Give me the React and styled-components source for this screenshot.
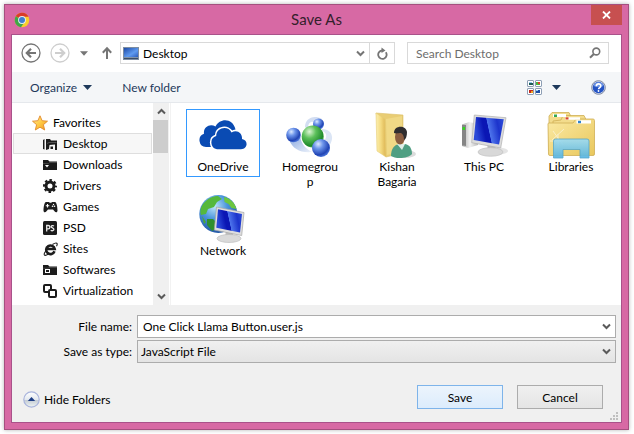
import React, { useState } from "react";
import styled, { createGlobalStyle, css } from "styled-components";

const GlobalStyle = createGlobalStyle`
  * { box-sizing: border-box; }
  body {
    margin: 0;
    background: #fff;
    color: #000;
    font: 12px/15px Lato, "Open Sans", sans-serif;
  }
  button, input, select { font: inherit; color: inherit; }
  svg { display: block; flex: none; }
`;

/* ---------- window frame ---------- */

const Dialog = styled.main`
  margin: 4px 5px 4px 4px;
  padding: 0 6px 6px;
  background: #d769a4;
  border: 1px solid #a5507f;
  box-shadow: 0 0 4px rgba(0, 0, 0, 0.3);
`;

const TitleBar = styled.header`
  display: grid;
  grid-template-columns: 40px 1fr 40px;
  height: 29px;
`;

const AppIcon = styled.span`
  padding: 7px 0 0 3px;
`;

const Title = styled.h1`
  margin: 0;
  font-size: 15px;
  font-weight: 400;
  line-height: 29px;
  text-align: center;
  color: #33202b;
`;

const CloseButton = styled.button`
  justify-self: end;
  display: grid;
  place-items: center;
  width: 31px;
  height: 20px;
  padding: 0;
  border: 0;
  background: #c75050;
`;

const Client = styled.div`
  border: 1px solid #a9528a;
  background: #fff;
`;

/* ---------- navigation ---------- */

const NavBar = styled.nav`
  display: flex;
  align-items: center;
  height: 37px;
  padding: 0 12px 1px 9px;
`;

const NavButtons = styled.div`
  display: flex;
  align-items: center;
  gap: 9px;
  width: 99px;
  flex: none;
`;

const IconButton = styled.button`
  display: grid;
  place-items: center;
  flex: none;
  padding: 0;
  border: 0;
  background: none;
  width: ${(p) => p.$width || 20}px;
  height: 20px;
`;

const FieldBox = styled.div`
  display: flex;
  align-items: center;
  height: 22px;
  border: 1px solid #d9d9d9;
  background: #fff;
  min-width: 0;
`;

const AddressBox = styled(FieldBox)`
  flex: 1 1 275px;
  margin-right: 12px;
`;

const SearchBox = styled(FieldBox)`
  flex: 1 1 202px;
  padding: 0 6px 0 8px;
`;

const Crumb = styled.button`
  display: flex;
  align-items: center;
  gap: 4px;
  flex: 1;
  padding: 0 0 0 2px;
  border: 0;
  background: none;
  text-align: left;
`;

const RefreshButton = styled(IconButton)`
  border-left: 1px solid #d9d9d9;
`;

const SearchInput = styled.input`
  flex: 1;
  min-width: 0;
  padding: 0;
  border: 0;
  outline: 0;
  background: none;
  &::placeholder { color: #6d6d6d; opacity: 1; }
`;

/* ---------- toolbar ---------- */

const Toolbar = styled.div`
  display: flex;
  align-items: center;
  height: 31px;
  padding: 0 15px 0 18px;
  background: #f4f6f8;
  border-bottom: 1px solid #e5e8ec;
`;

const ToolButton = styled.button`
  display: flex;
  align-items: center;
  gap: ${(p) => p.$gap || 6}px;
  padding: 0;
  border: 0;
  background: none;
  color: #1e395b;
`;

const ToolGroup = styled.div`
  display: flex;
  align-items: center;
  gap: 30px;
  &:last-child { margin-left: auto; }
`;

/* ---------- body ---------- */

const Body = styled.div`
  display: flex;
`;

const Tree = styled.ul`
  flex: none;
  width: 141px;
  margin: 0;
  padding: 9px 1px 4px;
  list-style: none;
`;

const TreeRow = styled.button`
  display: flex;
  align-items: center;
  gap: 5px;
  width: 100%;
  height: 21px;
  padding: 0 0 0 ${(p) => (p.$root ? 18 : 29)}px;
  border: 1px solid ${(p) => (p.$active ? "#dedede" : "transparent")};
  background: ${(p) => (p.$active ? "#f7f7f7" : "none")};
  white-space: nowrap;
`;

const ScrollBar = styled.div`
  display: flex;
  flex-direction: column;
  flex: none;
  width: 16px;
  background: #f0f0f0;
`;

const ScrollButton = styled.button`
  display: grid;
  place-items: center;
  height: 17px;
  padding: 0;
  border: 0;
  background: none;
  &:last-child { margin-top: auto; }
`;

const ScrollThumb = styled.div`
  height: 33px;
  margin-right: 1px;
  background: #cdcdcd;
`;

const Files = styled.ul`
  flex: 1;
  display: grid;
  grid-template-columns: repeat(auto-fill, 74px);
  grid-auto-rows: 84px;
  align-items: start;
  column-gap: 13px;
  margin: 0 0 0 1px;
  padding: 6px 12px 0 15px;
  border-left: 1px solid #f2f2f2;
  list-style: none;
`;

const FileItem = styled.button`
  display: flex;
  flex-direction: column;
  align-items: center;
  width: 74px;
  padding: 1px 6px 2px;
  border: 1px solid ${(p) => (p.$active ? "#3399ff" : "transparent")};
  background: none;
`;

const FileName = styled.span`
  width: 60px;
  overflow-wrap: anywhere;
  text-align: center;
`;

/* ---------- footer ---------- */

const Footer = styled.form`
  padding: 10px 5px 13px 0;
  background: #f0f0f0;
`;

const Fields = styled.div`
  display: grid;
  grid-template-columns: 120px 1fr;
  column-gap: 5px;
  row-gap: 2px;
  align-items: center;
`;

const Label = styled.label`
  text-align: right;
`;

const Combo = styled.div`
  display: grid;
  grid-template-columns: 1fr 18px;
  align-items: center;
  height: 23px;
  border: 1px solid #acacac;
  background: ${(p) => (p.$raised ? "linear-gradient(#f0f0f0, #e4e4e4)" : "#fff")};
`;

const comboControl = css`
  grid-row: 1;
  grid-column: 1 / 3;
  width: 100%;
  height: 21px;
  border: 0;
  outline: 0;
  background: none;
`;

const NameInput = styled.input`
  ${comboControl}
  padding: 0 20px 1px 5px;
`;

const TypeSelect = styled.select`
  ${comboControl}
  appearance: none;
  padding: 0 20px 0 3px;
`;

const ComboArrow = styled.span`
  grid-row: 1;
  grid-column: 2;
  display: grid;
  place-items: center;
  pointer-events: none;
`;

const Actions = styled.div`
  display: flex;
  align-items: flex-end;
  gap: 14px;
  margin-top: 22px;
  padding: 0 13px 0 11px;
`;

const HideFolders = styled.button`
  display: flex;
  align-items: center;
  gap: 4px;
  height: 20px;
  margin-right: auto;
  padding: 0;
  border: 0;
  background: none;
`;

const PushButton = styled.button`
  width: 86px;
  height: 24px;
  padding: 0;
  border: 1px solid ${(p) => (p.$primary ? "#7eb4ea" : "#acacac")};
  background: ${(p) =>
    p.$primary
      ? "linear-gradient(#ecf4fc, #dcecfc)"
      : "linear-gradient(#f0f0f0, #e5e5e5)"};
`;

const FooterFrame = styled.div`
  position: relative;
`;

const Grip = styled.span`
  position: absolute;
  right: 3px;
  bottom: 2px;
`;

/* ---------- small glyphs ---------- */

const Caret = ({ color = "#1e395b", w = 9 }) => (
  <svg width={w} height="5" viewBox="0 0 9 5">
    <path d="M0 0h9L4.500 5z" fill={color} />
  </svg>
);

const Chevron = ({ up, color = "#5a5a5a" }) => (
  <svg width="9" height="7" viewBox="0 0 9 7">
    <path
      d={up ? "M1 5.500 4.500 2 8 5.500" : "M1 1.500 4.500 5 8 1.500"}
      fill="none"
      stroke={color}
      strokeWidth="2"
    />
  </svg>
);

const ChromeIcon = () => (
  <svg width="16" height="16" viewBox="0 0 16 16">
    <circle cx="8" cy="8" r="7.300" fill="#f8cf2c" />
    <path d="M8 8 1.700 4.300A7.300 7.300 0 0 1 14.500 4.700H8z" fill="#d93a2b" />
    <path d="M8 8 1.700 4.300A7.300 7.300 0 0 0 7 15.200L10.500 10z" fill="#3fa648" />
    <circle cx="8" cy="8" r="3.900" fill="#e9eef3" />
    <circle cx="8" cy="8" r="3" fill="#3f7fd0" />
  </svg>
);

const CloseIcon = () => (
  <svg width="9" height="8" viewBox="0 0 9 8">
    <path d="M1 .5 8 7.500M8 .5 1 7.500" stroke="#fff" strokeWidth="1.800" />
  </svg>
);

const RoundArrow = ({ color, flip }) => (
  <svg width="20" height="20" viewBox="0 0 20 20">
    <g
      fill="none"
      stroke={color}
      transform={flip ? "translate(20 0) scale(-1 1)" : undefined}
    >
      <circle cx="10" cy="10" r="9" strokeWidth="1.300" />
      <path d="M15 10H6M10 5.800 5.800 10l4.200 4.200" strokeWidth="2.200" />
    </g>
  </svg>
);

const UpArrow = () => (
  <svg width="12" height="14" viewBox="0 0 12 14">
    <path d="M6 13V2.500M1.800 6.700 6 2.300l4.200 4.400" fill="none" stroke="#757575" strokeWidth="2" />
  </svg>
);

const DesktopIcon = () => (
  <svg width="16" height="14" viewBox="0 0 16 14">
    <defs>
      <linearGradient id="desk" x1="0" y1="0" x2="1" y2="1">
        <stop offset="0" stopColor="#1c49a6" />
        <stop offset="0.600" stopColor="#5f9bf0" />
        <stop offset="1" stopColor="#2c5cbc" />
      </linearGradient>
    </defs>
    <rect x="0.500" y="1.500" width="15" height="12" fill="#8294a8" stroke="#7c8da2" />
    <rect x="1" y="2" width="14" height="9" fill="url(#desk)" />
    <path d="M1 12.500h14" stroke="#3b4d66" />
  </svg>
);

const RefreshIcon = () => (
  <svg width="12" height="13" viewBox="0 0 12 13">
    <path d="M9.800 5.200A4.200 4.200 0 1 1 6 3.500" fill="none" stroke="#757575" strokeWidth="1.800" />
    <path d="M5.500 .5 9.500 3.500 5.500 6z" fill="#757575" />
  </svg>
);

const SearchIcon = () => (
  <svg width="12" height="12" viewBox="0 0 12 12">
    <circle cx="7.300" cy="4.500" r="3.400" fill="none" stroke="#757575" strokeWidth="1.600" />
    <path d="M4.800 7 1 10.800" stroke="#757575" strokeWidth="2" />
  </svg>
);

const ViewIcon = () => (
  <svg width="15" height="15" viewBox="0 0 15 15">
    <g fill="#fff" stroke="#8e9fb5">
      <rect x="0.500" y="0.500" width="6" height="6" rx="0.500" />
      <rect x="8.500" y="0.500" width="6" height="6" rx="0.500" />
      <rect x="0.500" y="8.500" width="6" height="6" rx="0.500" />
      <rect x="8.500" y="8.500" width="6" height="6" rx="0.500" />
    </g>
    <path d="M2 2h3v2H2z" fill="#8fc8ef" />
    <path d="M2 3h4v2H2z" fill="#1f5c55" />
    <path d="M9 2h4v3H9z" fill="#49b53c" />
    <path d="M11 2h2v2h-2z" fill="#e0402c" />
    <path d="M2 10h4v3H2z" fill="#c3261a" />
    <path d="M4 11h2v2H4z" fill="#f0a61f" />
    <path d="M9 10h4v3H9z" fill="#1d4ea8" />
    <path d="M9 10h2v1H9z" fill="#8fc8ef" />
  </svg>
);

const HelpIcon = () => (
  <svg width="15" height="15" viewBox="0 0 15 15">
    <circle cx="7.500" cy="7.500" r="6.800" fill="#dfe6f4" stroke="#7b86a0" />
    <circle cx="7.500" cy="7.500" r="5.800" fill="#2453c4" />
    <path d="M2.500 6a5.200 5.200 0 0 1 10 0Q7.500 8 2.500 6z" fill="#6b93e4" />
    <path d="M5.300 6.200c0-3.200 4.600-3 4.500-.2 0 1.600-2.200 1.600-2.200 3.200" fill="none" stroke="#fff" strokeWidth="1.600" />
    <circle cx="7.500" cy="11" r="0.900" fill="#fff" />
  </svg>
);

const HideIcon = () => (
  <svg width="17" height="17" viewBox="0 0 17 17">
    <defs>
      <linearGradient id="hide" x1="0" y1="0" x2="0" y2="1">
        <stop offset="0" stopColor="#fff" />
        <stop offset="0.500" stopColor="#e4e9ef" />
        <stop offset="0.550" stopColor="#c4ccd4" />
        <stop offset="1" stopColor="#f0f5f5" />
      </linearGradient>
    </defs>
    <circle cx="8.500" cy="8.500" r="7.700" fill="url(#hide)" stroke="#a9b4dc" strokeWidth="1.200" />
    <path d="M4.800 10 8.500 6l3.700 4z" fill="#1f3f86" />
  </svg>
);

/* ---------- folder tree icons ---------- */

const ink = "#1c1c1c";

const treeIcons = {
  star: (
    <svg width="16" height="16" viewBox="0 0 16 16">
      <defs>
        <linearGradient id="star" x1="0" y1="0" x2="1" y2="1">
          <stop offset="0" stopColor="#ffe9a0" />
          <stop offset="0.500" stopColor="#ffcb45" />
          <stop offset="1" stopColor="#ef9420" />
        </linearGradient>
      </defs>
      <path
        d="M8 .8 10.100 5.700 15.500 6.200 11.400 9.700 12.700 15 8 12.200 3.300 15 4.600 9.700.5 6.200 5.900 5.700z"
        fill="url(#star)"
        stroke="#e28a2b"
        strokeWidth="0.900"
        strokeLinejoin="round"
      />
    </svg>
  ),
  desktop: (
    <svg width="15" height="14" viewBox="0 0 15 14">
      <path d="M0 3 1.500 2v10.500L0 12z" fill={ink} />
      <path d="M3 2h4l1 1.500h6V13h-2V7.500L6.500 8 6 12l-3 1z" fill={ink} />
      <path d="M4 6.500 6 5.500h7.500" fill="none" stroke="#777" strokeWidth="0.600" />
      <path d="M7.500 9.500H10V12H7.500z" fill={ink} />
    </svg>
  ),
  downloads: (
    <svg width="15" height="14" viewBox="0 0 15 14">
      <path d="M0 2h5l1.500 1.500H14V12H0z" fill={ink} />
      <path d="M0 5.500h5.500l1-1H14" fill="none" stroke="#606060" strokeWidth="0.600" />
      <path d="M2 7h4L4 9.500z" fill="#fff" />
    </svg>
  ),
  gear: (
    <svg width="15" height="14" viewBox="0 0 15 14">
      <circle cx="7" cy="7" r="4" fill="none" stroke={ink} strokeWidth="3" />
      <circle cx="7" cy="7" r="6" fill="none" stroke={ink} strokeWidth="2" strokeDasharray="2.500 2.212" strokeDashoffset="1.250" />
    </svg>
  ),
  games: (
    <svg width="15" height="14" viewBox="0 0 15 14">
      <path d="M3 2h3l.7.8h1.600L9 2h3c1.500 0 2.500 5 2.500 8.500 0 2-1.800 2.500-3 .8L10 9.500H5l-1.500 1.800C2.300 13 .5 12.500.5 10.500.5 7 1.500 2 3 2z" fill={ink} />
      <path d="M4.500 4v3.500M2.800 5.700h3.500" stroke="#fff" strokeWidth="1.100" />
      <circle cx="9.500" cy="6.200" r="0.800" fill="#fff" />
      <circle cx="11.500" cy="6.200" r="0.800" fill="#fff" />
      <circle cx="10.500" cy="4.500" r="0.700" fill="#fff" />
    </svg>
  ),
  psd: (
    <svg width="15" height="14" viewBox="0 0 15 14">
      <rect width="14" height="14" rx="1.500" fill={ink} />
      <path d="M3.700 10.500V4.500h1.500a1.600 1.600 0 0 1 0 3.300H3.700M11 5c-1.200-.8-3-.4-2.800.8.200 1.200 2.700 1 2.700 2.500 0 1.600-2 1.800-3.200 1" fill="none" stroke="#e8e8e8" strokeWidth="1.300" />
    </svg>
  ),
  sites: (
    <svg width="15" height="14" viewBox="0 0 15 14">
      <path d="M11.500 9.300A4.300 4.300 0 1 1 11.700 7H4.500" fill="none" stroke={ink} strokeWidth="2.600" />
      <path d="M9.500 2.500C14 -.5 15 1.500 13.500 4.200M3 8.500C-.5 13.500 1.500 14.500 5.500 12" fill="none" stroke={ink} strokeWidth="1.100" />
    </svg>
  ),
  softwares: (
    <svg width="15" height="14" viewBox="0 0 15 14">
      <path d="M0 2h5l1.500 1.500H14V12H0z" fill={ink} />
      <path d="M0 5.200h5l1-.7h8" fill="none" stroke="#606060" strokeWidth="0.600" />
      <rect x="2.500" y="6.500" width="4" height="3" fill="none" stroke="#fff" />
    </svg>
  ),
  virtual: (
    <svg width="15" height="14" viewBox="0 0 15 14">
      <rect x="1" y="1" width="7" height="7" rx="1" fill="none" stroke={ink} strokeWidth="2" />
      <rect x="6" y="6" width="7" height="7" rx="1" fill="#fff" stroke={ink} strokeWidth="2" />
    </svg>
  ),
};

/* ---------- large file icons ---------- */

const BigIcon = ({ children }) => (
  <svg width="48" height="48" viewBox="0 0 48 48">
    {children}
  </svg>
);

const Screen = ({ id }) => (
  <linearGradient id={id} x1="0" y1="0.200" x2="1" y2="0">
    <stop offset="0" stopColor="#2a49d8" />
    <stop offset="0.280" stopColor="#0a16b4" />
    <stop offset="0.420" stopColor="#0a16b4" />
    <stop offset="0.440" stopColor="#4d74ec" />
    <stop offset="0.750" stopColor="#1c34cc" />
    <stop offset="1" stopColor="#2f50dc" />
  </linearGradient>
);

const OneDriveArt = () => (
  <BigIcon>
    <path d="M7 36a6.800 6.800 0 0 1-2-13.200C4 16 11 12 16.500 15.500 21 6.500 34 7 36.500 18.500V36z" fill="#0a4bb3" />
    <path
      d="M18 38.200a6.800 6.800 0 0 1-.8-13.200C17.500 16 29.500 14.500 32.500 21.500 38 18 43.500 22 43 28c6.500 1 6 10-1 10.200z"
      fill="#0a4bb3"
      stroke="#fff"
      strokeWidth="3"
      paintOrder="stroke"
    />
  </BigIcon>
);

const HomegroupArt = () => (
  <BigIcon>
    <defs>
      <radialGradient id="ballB" cx="0.350" cy="0.280" r="0.750">
        <stop offset="0" stopColor="#dce9ff" />
        <stop offset="0.350" stopColor="#6c94ea" />
        <stop offset="0.800" stopColor="#2144b4" />
        <stop offset="1" stopColor="#4d78dc" />
      </radialGradient>
      <radialGradient id="ballG" cx="0.350" cy="0.280" r="0.750">
        <stop offset="0" stopColor="#dff5d6" />
        <stop offset="0.400" stopColor="#5cc05a" />
        <stop offset="0.850" stopColor="#1f8a2c" />
        <stop offset="1" stopColor="#4fb556" />
      </radialGradient>
      <linearGradient id="trail" x1="0" y1="0" x2="1" y2="1">
        <stop offset="0" stopColor="#86a5de" />
        <stop offset="1" stopColor="#eef3fb" />
      </linearGradient>
    </defs>
    <path d="M3 29C7 38 14 42 26 41 20 38 15 33 14 25z" fill="url(#trail)" />
    <path d="M19 16C19 8 27 3 36 8L31 12C25 9 22 12 22 17z" fill="#d3def2" />
    <path d="M36 18c10 0 13 9 7 17l-5-5c4-5 2-9-2-10z" fill="#dbe5f5" />
    <circle cx="7.500" cy="24" r="7.300" fill="url(#ballB)" />
    <circle cx="32.500" cy="13" r="5.500" fill="url(#ballB)" />
    <circle cx="26.700" cy="25.500" r="11" fill="url(#ballG)" />
    <circle cx="35" cy="37" r="9" fill="url(#ballB)" />
  </BigIcon>
);

const UserFolderArt = () => (
  <BigIcon>
    <defs>
      <linearGradient id="flap" x1="0" y1="0" x2="1" y2="0">
        <stop offset="0" stopColor="#fdf0b0" />
        <stop offset="0.500" stopColor="#f3d97e" />
        <stop offset="1" stopColor="#dcb452" />
      </linearGradient>
    </defs>
    <ellipse cx="32" cy="43" rx="11" ry="4" fill="#dcdcdc" />
    <path d="M3 2 30 4V42L13 46z" fill="#e9cd74" stroke="#dcc06a" strokeWidth="0.600" />
    <path d="M3 2 12 8l1 38-9-6z" fill="url(#flap)" stroke="#e6cc75" strokeWidth="0.600" />
    <path d="M13 8 29 5v35l-15 4z" fill="#f0d986" />
    <path d="M18 45c0-7 3-11 8-12h6c5 1 7 5 7 10-4 5-17 5-21 2z" fill="#4f9f83" />
    <path d="M24 33h8l-3 6z" fill="#dfeee8" />
    <ellipse cx="27" cy="26" rx="5" ry="7.500" fill="#8a5d40" />
    <path d="M21 22c0-8 12-8 13-1 0 4-1 7-3 8 0-4-1-6-3-7-3 0-5 1-7 0z" fill="#2f2d2f" />
  </BigIcon>
);

const PcArt = () => (
  <BigIcon>
    <defs>
      <Screen id="scrA" />
      <linearGradient id="metal" x1="0" y1="0" x2="1" y2="0">
        <stop offset="0" stopColor="#a8a8a8" />
        <stop offset="0.500" stopColor="#f2f2f2" />
        <stop offset="1" stopColor="#b8b8b8" />
      </linearGradient>
    </defs>
    <ellipse cx="34" cy="40" rx="14" ry="4" fill="#e4e4e4" />
    <path d="M2 13.500 9 11l9 2v21L8 37l-6-2z" fill="url(#metal)" />
    <path d="M2 14h4v21l-4-.8z" fill="#858585" />
    <path d="M2.500 16H5v3H2.500z" fill="#35d420" />
    <path d="M27 32h8l1 8h-8z" fill="#bdbdbd" />
    <ellipse cx="30.500" cy="41" rx="12.500" ry="4.300" fill="#d8d8d8" stroke="#bcbcbc" strokeWidth="0.600" />
    <path d="M14.300 4 46 6.700 40.700 37 11.700 31.700z" fill="#dcdcdc" stroke="#b0b0b0" strokeWidth="0.700" />
    <path d="M16 6 43.800 8.300 39 33.500 13.700 29z" fill="url(#scrA)" />
  </BigIcon>
);

const LibrariesArt = () => (
  <BigIcon>
    <defs>
      <linearGradient id="lib" x1="0" y1="0" x2="1" y2="1">
        <stop offset="0" stopColor="#fbeaa4" />
        <stop offset="1" stopColor="#e9c75c" />
      </linearGradient>
      <linearGradient id="stand" x1="0" y1="0" x2="0" y2="1">
        <stop offset="0" stopColor="#9fdcf2" />
        <stop offset="1" stopColor="#55b4e2" />
      </linearGradient>
    </defs>
    <g stroke="#cfae55" strokeWidth="0.800">
      <path d="M2 40V5l3-3.500h17l2 4V40z" fill="#f3dc8c" />
      <path d="M6 40V10l8-1 2-4.500h21l2 4 1 31z" fill="#f3dc8c" />
      <path d="M1 13q0-1 1-1H26l3-4H46q1.500 0 1.500 1.500V43q0 1.500-1.500 1.500H3Q1.500 44.500 1.500 43z" fill="url(#lib)" />
    </g>
    <path d="M6 3h13v3H6zM18 6.300h15v2.500H18zM29.500 9.300H44v3.200H29.500z" fill="#fff" />
    <path d="M7 3.500h3v2.500H7z" fill="#35a852" />
    <path d="M18.500 6.300h3v2.200h-3z" fill="#d8482c" />
    <path d="M31 9.800h3v2.400h-3z" fill="#2f83cf" />
    <path d="M11 23v14M5 29l12-11M6 20l10 14M3 30h14" stroke="#fff" strokeWidth="1" opacity="0.500" />
    <path d="M6.500 30q0-2 2-2h31.500q2 0 2 2v17h-9v-8.500H16V47H6.500z" fill="url(#stand)" stroke="#4ba2cc" strokeWidth="0.800" opacity="0.920" />
  </BigIcon>
);

const NetworkArt = () => (
  <BigIcon>
    <defs>
      <Screen id="scrB" />
      <radialGradient id="globe" cx="0.400" cy="0.300" r="0.750">
        <stop offset="0" stopColor="#bfe6fb" />
        <stop offset="0.450" stopColor="#4a94dc" />
        <stop offset="1" stopColor="#1d4f9f" />
      </radialGradient>
    </defs>
    <circle cx="19.300" cy="19" r="19" fill="url(#globe)" />
    <path d="M4 9C9 3 14 1 19 1l4 3-5 3-3 5-6 2-2 5-5 1C.5 16 2 12 4 9z" fill="#55b83c" />
    <path d="M25 2c6 1 11 6 12.500 12l-5-1-3-4-4-2z" fill="#6cc63f" />
    <path d="M8 24l6 0 4 4-1 6-4 2-5-6z" fill="#2f8f2f" />
    <path d="M3 21l4 6-2 2z" fill="#4aa838" />
    <path d="M27 35h7v8h-8z" fill="#bdbdbd" />
    <ellipse cx="30" cy="43.500" rx="12" ry="4" fill="#dadada" stroke="#b8b8b8" strokeWidth="0.600" />
    <path d="M17.500 12 45 17.500 42.700 40.500 15.300 35z" fill="#dedede" stroke="#a5a5a5" strokeWidth="0.700" />
    <path d="M19 14.300 43 19 41 37.500 17.300 32.800z" fill="url(#scrB)" />
  </BigIcon>
);

/* ---------- data ---------- */

const favorites = [
  ["Desktop", "desktop"],
  ["Downloads", "downloads"],
  ["Drivers", "gear"],
  ["Games", "games"],
  ["PSD", "psd"],
  ["Sites", "sites"],
  ["Softwares", "softwares"],
  ["Virtualization", "virtual"],
];

const files = [
  ["OneDrive", OneDriveArt],
  ["Homegroup", HomegroupArt],
  ["Kishan Bagaria", UserFolderArt],
  ["This PC", PcArt],
  ["Libraries", LibrariesArt],
  ["Network", NetworkArt],
];

export default function App() {
  const [folder, setFolder] = useState("Desktop");
  const [selected, setSelected] = useState("OneDrive");

  return (
    <>
      <GlobalStyle />
      <Dialog>
        <TitleBar>
          <AppIcon><ChromeIcon /></AppIcon>
          <Title>Save As</Title>
          <CloseButton aria-label="Close"><CloseIcon /></CloseButton>
        </TitleBar>
        <Client>
          <NavBar>
            <NavButtons>
              <IconButton aria-label="Back"><RoundArrow color="#757575" /></IconButton>
              <IconButton aria-label="Forward"><RoundArrow color="#cecece" flip /></IconButton>
              <IconButton aria-label="Recent locations" $width={9}><Caret color="#757575" w={8} /></IconButton>
              <IconButton aria-label="Up"><UpArrow /></IconButton>
            </NavButtons>
            <AddressBox>
              <Crumb><DesktopIcon />Desktop</Crumb>
              <IconButton aria-label="Previous locations" $width={17}><Chevron color="#757575" /></IconButton>
              <RefreshButton aria-label="Refresh" $width={25}><RefreshIcon /></RefreshButton>
            </AddressBox>
            <SearchBox>
              <SearchInput aria-label="Search Desktop" placeholder="Search Desktop" />
              <IconButton aria-label="Search" $width={15}><SearchIcon /></IconButton>
            </SearchBox>
          </NavBar>
          <Toolbar>
            <ToolGroup>
              <ToolButton>Organize<Caret /></ToolButton>
              <ToolButton>New folder</ToolButton>
            </ToolGroup>
            <ToolGroup>
              <ToolButton aria-label="Change view" $gap={10}><ViewIcon /><Caret /></ToolButton>
              <ToolButton aria-label="Help"><HelpIcon /></ToolButton>
            </ToolGroup>
          </Toolbar>
          <Body>
            <Tree>
              <li><TreeRow $root>{treeIcons.star}Favorites</TreeRow></li>
              {favorites.map(([name, icon]) => (
                <li key={name}>
                  <TreeRow $active={name === folder} onClick={() => setFolder(name)}>
                    {treeIcons[icon]}{name}
                  </TreeRow>
                </li>
              ))}
            </Tree>
            <ScrollBar>
              <ScrollButton aria-label="Scroll up"><Chevron up /></ScrollButton>
              <ScrollThumb />
              <ScrollButton aria-label="Scroll down"><Chevron /></ScrollButton>
            </ScrollBar>
            <Files>
              {files.map(([name, Art]) => (
                <li key={name}>
                  <FileItem $active={name === selected} onClick={() => setSelected(name)}>
                    <Art />
                    <FileName>{name}</FileName>
                  </FileItem>
                </li>
              ))}
            </Files>
          </Body>
          <FooterFrame>
            <Footer onSubmit={(e) => e.preventDefault()}>
              <Fields>
                <Label htmlFor="file-name">File name:</Label>
                <Combo>
                  <NameInput id="file-name" defaultValue="One Click Llama Button.user.js" />
                  <ComboArrow><Chevron /></ComboArrow>
                </Combo>
                <Label htmlFor="file-type">Save as type:</Label>
                <Combo $raised>
                  <TypeSelect id="file-type"><option>JavaScript File</option></TypeSelect>
                  <ComboArrow><Chevron /></ComboArrow>
                </Combo>
              </Fields>
              <Actions>
                <HideFolders type="button"><HideIcon />Hide Folders</HideFolders>
                <PushButton $primary>Save</PushButton>
                <PushButton type="button">Cancel</PushButton>
              </Actions>
            </Footer>
            <Grip>
              <svg width="8" height="8" viewBox="0 0 8 8">
                <path d="M6 0h2v2H6zM3 3h2v2H3zM6 3h2v2H6zM0 6h2v2H0zM3 6h2v2H3zM6 6h2v2H6z" fill="#bfbfbf" />
              </svg>
            </Grip>
          </FooterFrame>
        </Client>
      </Dialog>
    </>
  );
}
